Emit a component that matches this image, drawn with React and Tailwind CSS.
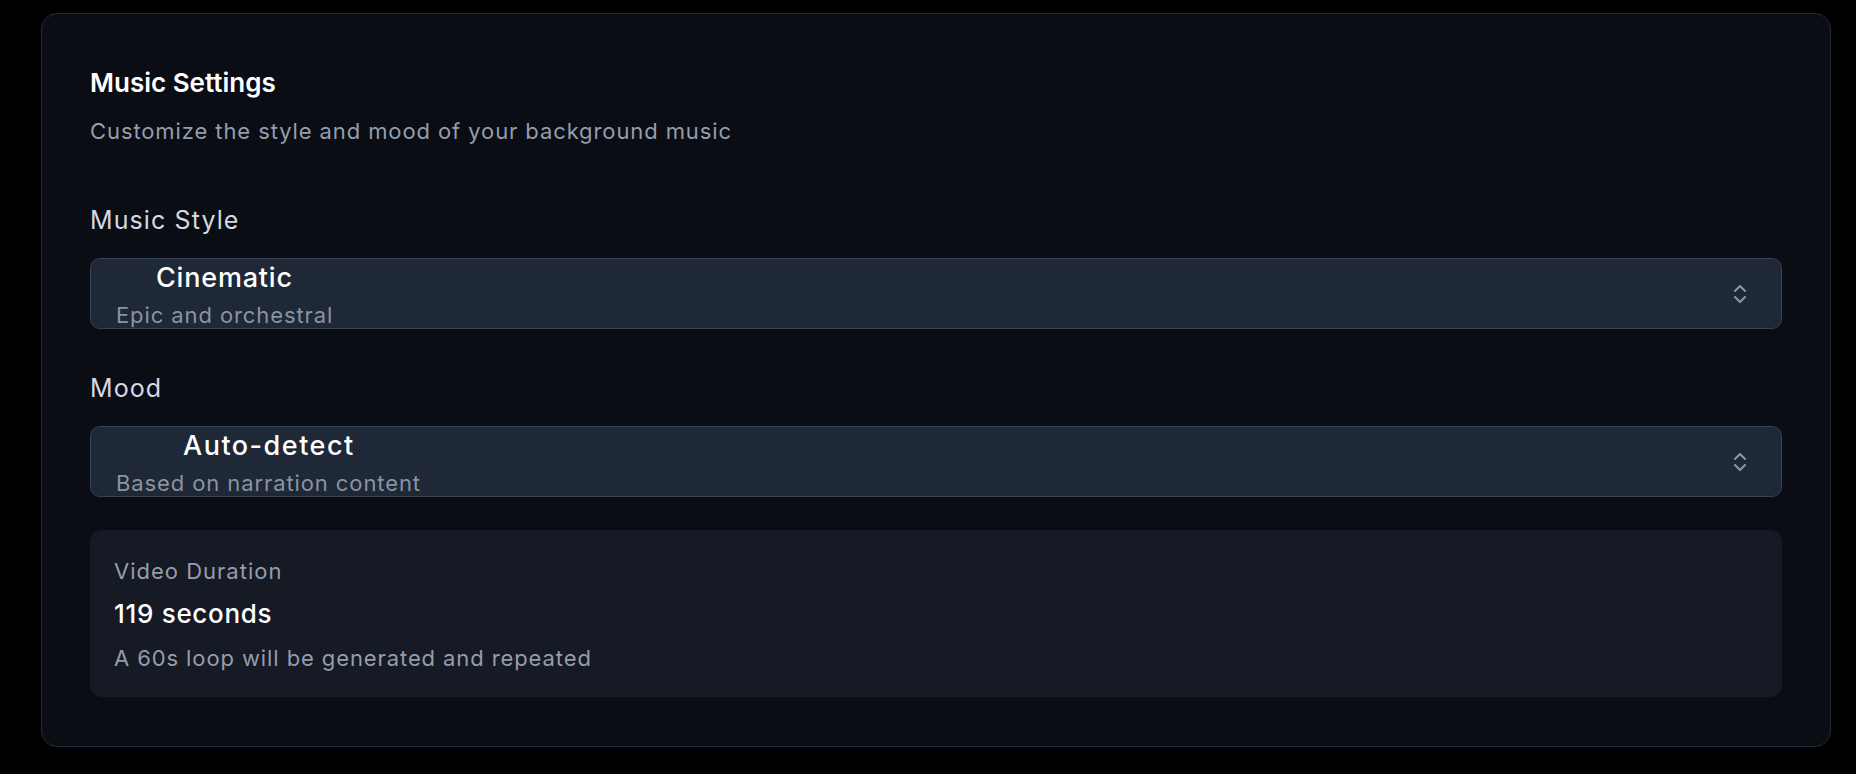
import { ChevronsUpDown } from 'lucide-react'

function SelectBox({ title, desc, indent }) {
  return (
    <div className="mt-[22px] flex h-[71px] items-center justify-between overflow-hidden rounded-[10px] border border-[#384253] bg-[#1e2836] pr-[29px]">
      <div className="flex h-full flex-col pt-[4px] pl-[25px]">
        <div className={`${indent} text-[27px] leading-[30px] font-medium text-white`}>{title}</div>
        <div className="mt-[9px] text-[22px] leading-[26px] tracking-[0.9px] text-[#8b93a1]">{desc}</div>
      </div>
      <ChevronsUpDown className="h-6 w-6 text-[#8e96a4]" strokeWidth={2} />
    </div>
  )
}

export default function App() {
  return (
    <div className="min-h-screen bg-black pt-[13px] pl-[41px]" style={{ fontFamily: 'Inter, "Noto Sans", sans-serif' }}>
      <div className="w-[1790px] rounded-2xl border border-[#202a38] bg-[#0a0d14] px-[48px] pt-[53px] pb-[49px]">
        <h2 className="text-[26px] leading-[32px] font-semibold text-white">Music Settings</h2>
        <p className="mt-[18px] text-[22px] leading-[28px] tracking-[0.9px] text-[#959dab]">
          Customize the style and mood of your background music
        </p>

        <div className="mt-[59px] text-[25px] leading-[32px] tracking-[1.1px] text-[#d5d9e0]">Music Style</div>
        <SelectBox title="Cinematic" desc="Epic and orchestral" indent="pl-[40px] tracking-[0.8px]" />

        <div className="mt-[43px] text-[25px] leading-[32px] tracking-[1.1px] text-[#d5d9e0]">Mood</div>
        <SelectBox title="Auto-detect" desc="Based on narration content" indent="pl-[67px] tracking-[1.5px]" />

        <div className="mt-[33px] rounded-xl bg-[#151a25] px-6 pt-[27px] pb-[25px]">
          <div className="text-[22px] leading-[28px] tracking-[1px] text-[#959dab]">Video Duration</div>
          <div className="mt-[13px] text-[26px] leading-[32px] font-medium tracking-[0.7px] text-white">119 seconds</div>
          <div className="mt-[14px] text-[22px] leading-[28px] tracking-[0.9px] text-[#959dab]">A 60s loop will be generated and repeated</div>
        </div>
      </div>
    </div>
  )
}
